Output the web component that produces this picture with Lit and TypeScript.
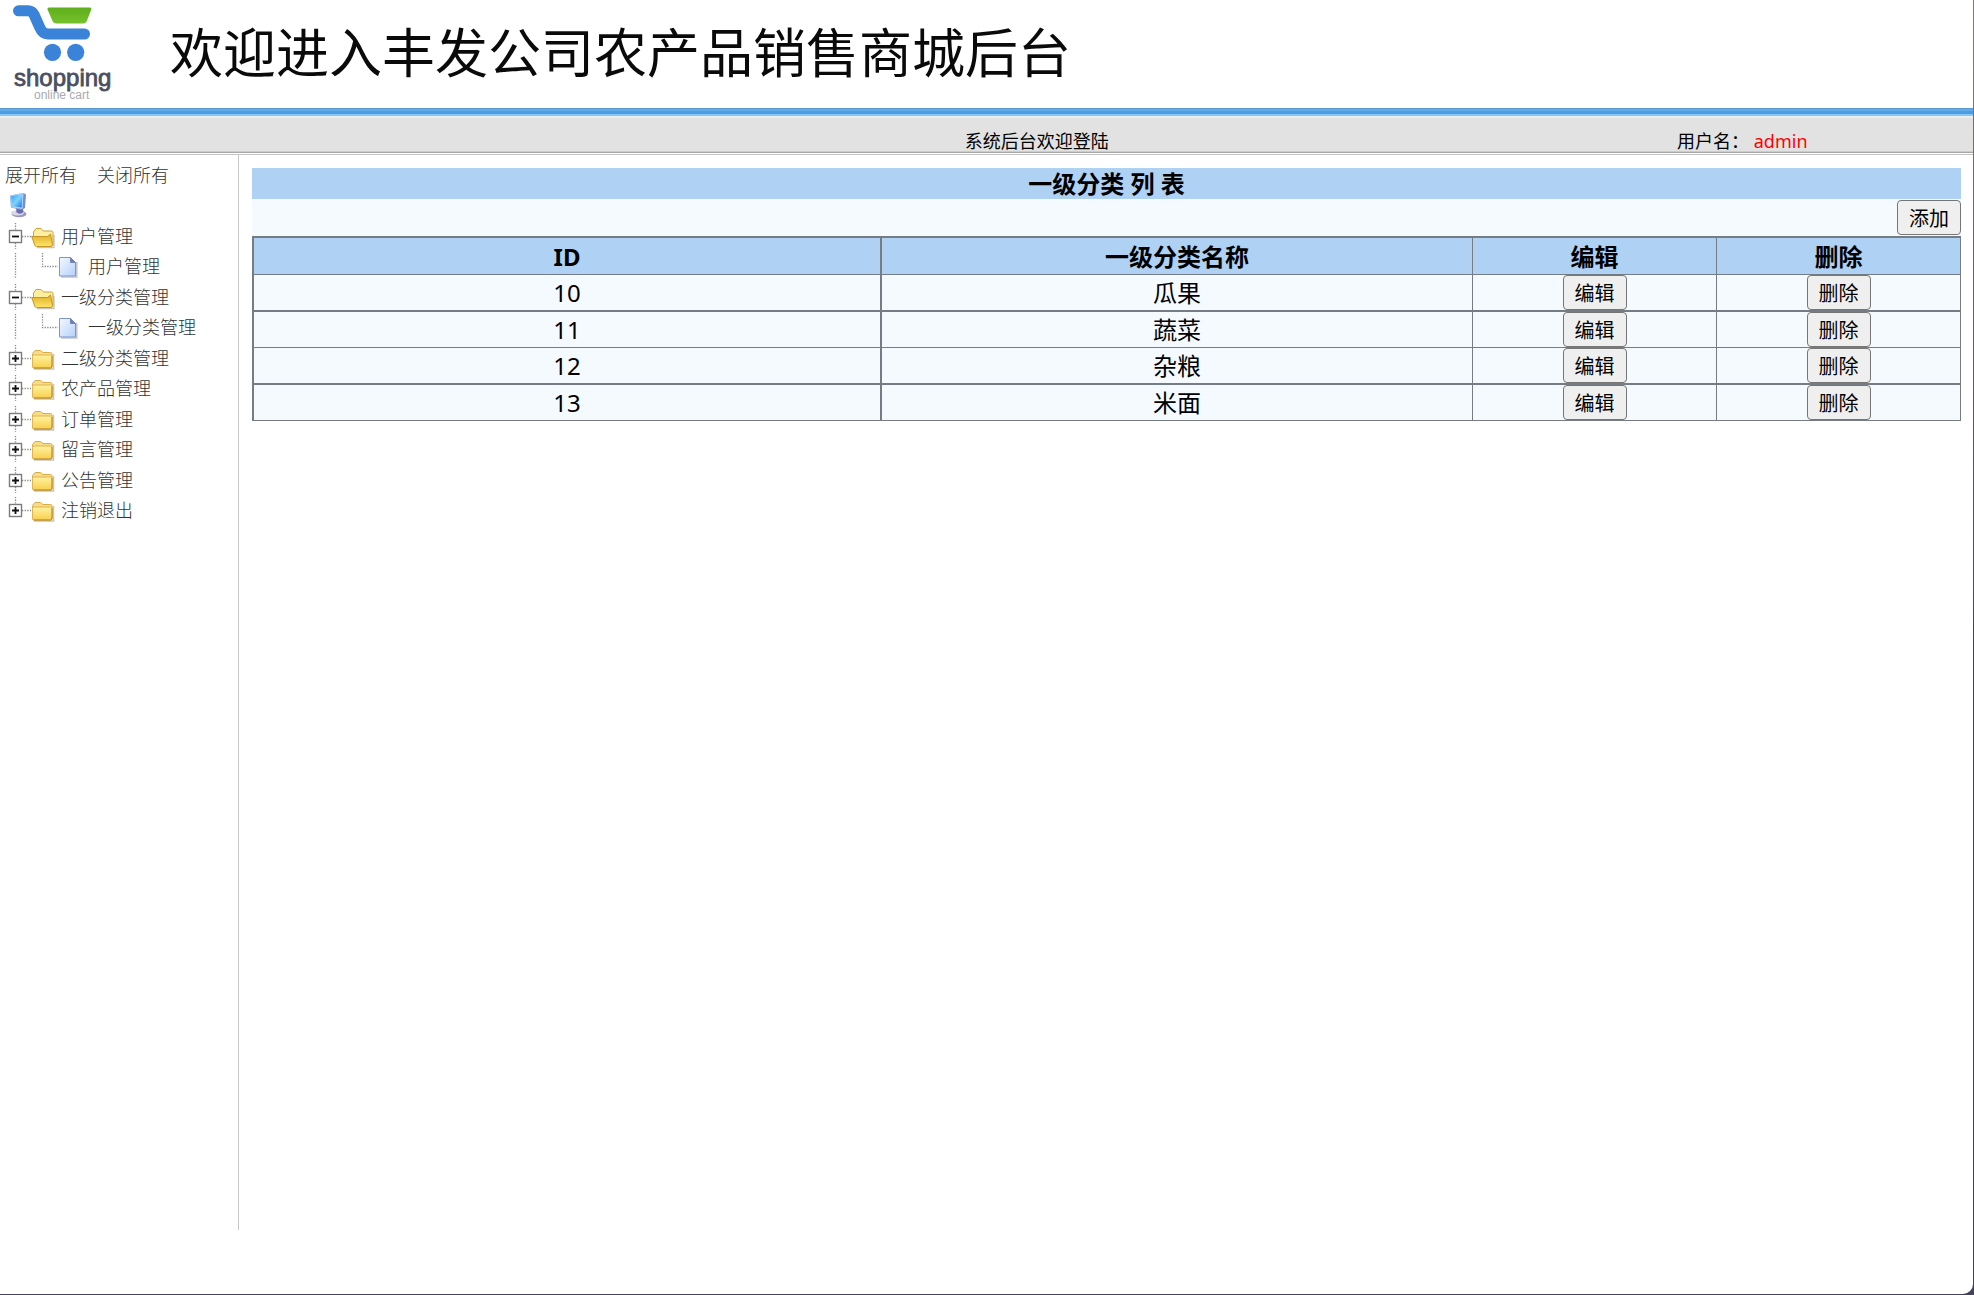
import { LitElement, html, svg, css, nothing } from "lit";
import { customElement, state } from "lit/decorators.js";
import { classMap } from "lit/directives/class-map.js";

interface Group {
  label: string;
  children: string[];
}

const GROUPS: Group[] = [
  { label: "用户管理", children: ["用户管理"] },
  { label: "一级分类管理", children: ["一级分类管理"] },
  { label: "二级分类管理", children: ["二级分类管理"] },
  { label: "农产品管理", children: ["农产品管理"] },
  { label: "订单管理", children: ["订单管理"] },
  { label: "留言管理", children: ["留言管理"] },
  { label: "公告管理", children: ["公告管理"] },
  { label: "注销退出", children: ["注销退出"] },
];

const CATEGORIES = [
  { id: 10, name: "瓜果" },
  { id: 11, name: "蔬菜" },
  { id: 12, name: "杂粮" },
  { id: 13, name: "米面" },
];

const dots = (d: string) =>
  svg`<path d=${d} fill="none" stroke="#8a8a8a" stroke-width="1.3" stroke-dasharray="1.3 1.3"/>`;

const logo = html`
  <svg class="logo" width="120" height="108" viewBox="0 0 120 108" role="img" aria-label="shopping online cart">
    <defs>
      <linearGradient id="basket" x1="0" y1="0" x2="0" y2="1">
        <stop offset="0" stop-color="#5fae1c" />
        <stop offset="1" stop-color="#76c22c" />
      </linearGradient>
    </defs>
    <path d="M18.500 10.800H28Q32 10.800 34 14.500L40 28Q42.500 34 48 34H84.500" fill="none" stroke="#3a83d8" stroke-width="11" stroke-linecap="round" stroke-linejoin="round" />
    <path d="M49 7.500H90Q92 7.500 91.300 9.500L87 20.500Q86 23.500 83 23.500H56.500Q53.500 23.500 52.300 20.500L47.500 9.500Q47 7.500 49 7.500Z" fill="url(#basket)" />
    <circle cx="52.500" cy="52.300" r="8.600" fill="#3a83d8" />
    <circle cx="75.700" cy="52.300" r="8.600" fill="#3a83d8" />
    <text x="14" y="86" class="logo-name">shopping</text>
    <text x="34" y="99" class="logo-sub">online cart</text>
  </svg>
`;

const computerIcon = html`
  <svg class="computer" width="18" height="26" viewBox="0 0 18 26" aria-hidden="true">
    <defs>
      <linearGradient id="screen" x1="0" y1="0" x2="1" y2="1">
        <stop offset="0" stop-color="#2f9cf0" />
        <stop offset=".5" stop-color="#7fd4fb" />
        <stop offset="1" stop-color="#1f6fe0" />
      </linearGradient>
    </defs>
    <ellipse cx="10" cy="22" rx="7.500" ry="3.300" fill="#9a98bc" />
    <ellipse cx="8.500" cy="20.800" rx="6.500" ry="2.600" fill="#d9d8ea" />
    <path d="M7 14L13.500 14L14.500 20Q11 23 7.500 20.500Z" fill="#6a6aac" />
    <path d="M1 3.500L14.500 1L17 2.500L16 16L12.500 18L2 15.500Z" fill="#7a8ccc" />
    <path d="M1 3.500L14.500 1L13.500 17L2.500 15.500Z" fill="#a9d4fa" />
    <path d="M2 4.300L13.500 2.300L12.700 15.500L3.300 14.300Z" fill="url(#screen)" />
  </svg>
`;

const toggleIcon = (open: boolean, last: boolean) => html`
  <svg width="24" height="26" viewBox="0 0 24 26" aria-hidden="true">
    ${dots(last ? "M8.500 0V7" : "M8.500 0V7M8.500 20V26")}
    ${dots("M15 13.500H24")}
    <rect x="2.500" y="7.500" width="12" height="12" fill="#fff" stroke="#7c7c7c" stroke-width="1.400" />
    <path d=${open ? "M5 13.500H12" : "M5 13.500H12M8.500 10V17"} stroke="#111" stroke-width="1.800" />
  </svg>
`;

const closedFolder = html`
  <svg width="24" height="26" viewBox="0 0 24 26" aria-hidden="true">
    <defs>
      <linearGradient id="front" x1="0" y1="0" x2="0" y2="1">
        <stop offset="0" stop-color="#fff2a0" />
        <stop offset="1" stop-color="#f9cf4e" />
      </linearGradient>
    </defs>
    <path d="M3 24H22.500V9" fill="none" stroke="#c9c4b8" stroke-width="1.500" />
    <path d="M1.500 21V8.500L4 5.500H9.500L12 7.500H19.500Q21 7.500 21 9V21Q21 23 19.500 23H3Q1.500 23 1.500 21Z" fill="#f8dc86" stroke="#d8ac48" />
    <path d="M1.500 21V11.500Q1.500 10 3 10H19.500Q21 10 21 11.500V21Q21 23 19.500 23H3Q1.500 23 1.500 21Z" fill="url(#front)" stroke="#e0b450" />
    <path d="M3 23H20Q21 22.500 21 21V11" fill="none" stroke="#b08a34" />
  </svg>
`;

const openFolder = html`
  <svg width="24" height="26" viewBox="0 0 24 26" aria-hidden="true">
    <defs>
      <linearGradient id="flap" x1="0" y1="0" x2="0" y2="1">
        <stop offset="0" stop-color="#dcae28" />
        <stop offset="1" stop-color="#ffe566" />
      </linearGradient>
    </defs>
    <path d="M6 24.500H23V12" fill="none" stroke="#c9c4b8" stroke-width="1.300" />
    <path d="M2.500 13V9L5 5.500H10L12.500 8H20.500Q22 8 22 9.500V21Q22 23 20.500 23H15Z" fill="#fdeea0" stroke="#d0a03c" />
    <path d="M.7 13.500H16.500L19.500 11L21.500 21.500Q21.500 23.500 20 23.500H5.500Q4.300 23.500 3.700 22Z" fill="url(#flap)" stroke="#c4962a" />
  </svg>
`;

const pageIcon = html`
  <svg width="24" height="26" viewBox="0 0 24 26" aria-hidden="true">
    <defs>
      <linearGradient id="sheet" x1="0" y1="0" x2="1" y2="1">
        <stop offset="0" stop-color="#f4f9ff" />
        <stop offset="1" stop-color="#b4d0fa" />
      </linearGradient>
    </defs>
    <path d="M3 24H18.800V9" fill="none" stroke="#c3c3cc" stroke-width="1.500" />
    <path d="M1.500 4.500H12.500L17.500 9.500V23H1.500Z" fill="url(#sheet)" stroke="#7f96cc" />
    <path d="M12.500 4.500V9.500H17.500Z" fill="#6a7fb8" stroke="#7486b8" />
  </svg>
`;

const childLines = (last: boolean) => html`
  <svg width="51" height="26" viewBox="0 0 51 26" aria-hidden="true">
    ${last ? nothing : dots("M8.500 0V26")}
    ${dots("M35.500 0V13.500H51")}
  </svg>
`;

@customElement("tree-menu")
export class TreeMenu extends LitElement {
  @state() private open = new Set<number>([0, 1]);

  static styles = css`
    :host {
      display: block;
      color: #333;
      font-size: 18px;
      font-weight: 300;
    }
    .actions {
      display: flex;
      gap: 20px;
      padding: 5px 5px 0;
    }
    button,
    a {
      font: inherit;
      color: inherit;
      text-decoration: none;
    }
    button {
      display: flex;
      padding: 0;
      border: 0;
      background: none;
      cursor: pointer;
    }
    .actions button {
      line-height: 30px;
    }
    .computer {
      display: block;
      margin: 2px 9px 2px;
    }
    ul {
      margin: 0;
      padding: 0;
      list-style: none;
    }
    svg {
      flex: none;
    }
    .row {
      display: flex;
      align-items: center;
      height: 31px;
      padding-left: 7px;
      line-height: 30px;
      white-space: nowrap;
    }
    .child,
    .closed:nth-child(even) .row {
      height: 30px;
    }
    .label {
      padding-left: 6px;
    }
  `;

  private toggle(i: number) {
    const next = new Set(this.open);
    if (!next.delete(i)) next.add(i);
    this.open = next;
  }

  render() {
    return html`
      <div class="actions">
        <button type="button" @click=${() => (this.open = new Set(GROUPS.keys()))}>展开所有</button>
        <button type="button" @click=${() => (this.open = new Set())}>关闭所有</button>
      </div>
      ${computerIcon}
      <ul>
        ${GROUPS.map((g, i) => {
          const open = this.open.has(i);
          const last = i === GROUPS.length - 1;
          return html`
            <li class=${classMap({ closed: !open })}>
              <div class="row">
                <button type="button" aria-expanded=${open} aria-label=${g.label} @click=${() => this.toggle(i)}>
                  ${toggleIcon(open, last)}
                </button>
                ${open ? openFolder : closedFolder}
                <a class="label" href="#">${g.label}</a>
              </div>
              ${open
                ? html`<ul>
                    ${g.children.map(
                      (c) => html`<li class="row child">${childLines(last)}${pageIcon}<a class="label" href="#">${c}</a></li>`
                    )}
                  </ul>`
                : nothing}
            </li>
          `;
        })}
      </ul>
    `;
  }
}

@customElement("category-list")
export class CategoryList extends LitElement {
  static styles = css`
    :host {
      display: block;
      background: #f4faff;
      color: #000;
      font-size: 24px;
    }
    h2 {
      margin: 0;
      background: #aed1f4;
      font-size: 24px;
      line-height: 31px;
      text-align: center;
    }
    .toolbar {
      display: flex;
      justify-content: flex-end;
      padding: 1px 0;
    }
    button {
      display: block;
      box-sizing: border-box;
      height: 35px;
      margin: 0 auto;
      padding: 2px 11px 0;
      border: 1px solid #767676;
      border-radius: 4px;
      background: #efefef;
      color: #000;
      font: inherit;
      font-size: 20px;
      line-height: 31px;
    }
    .toolbar button {
      margin: 0;
    }
    table {
      width: 100%;
      table-layout: fixed;
      border-spacing: 0;
      border: solid #767c84;
      border-width: 2px 0 0 2px;
    }
    .name {
      width: 591px;
    }
    .action {
      width: 244px;
    }
    th,
    td {
      box-sizing: border-box;
      height: 36px;
      padding: 0;
      border: solid #767c84;
      border-width: 0 1px 1px 0;
      line-height: 35px;
      text-align: center;
    }
    th {
      height: 37px;
      background: #aed1f4;
    }
    tbody tr:nth-child(odd) td {
      height: 37px;
      border-bottom-width: 2px;
    }
    th:first-child,
    td:first-child {
      border-right-width: 2px;
    }
  `;

  render() {
    return html`
      <h2>一级分类 列 表</h2>
      <div class="toolbar"><button type="button">添加</button></div>
      <table>
        <thead>
          <tr>
            <th scope="col">ID</th>
            <th class="name" scope="col">一级分类名称</th>
            <th class="action" scope="col">编辑</th>
            <th class="action" scope="col">删除</th>
          </tr>
        </thead>
        <tbody>
          ${CATEGORIES.map(
            (c) => html`<tr>
              <td>${c.id}</td>
              <td>${c.name}</td>
              <td><button type="button">编辑</button></td>
              <td><button type="button">删除</button></td>
            </tr>`
          )}
        </tbody>
      </table>
    `;
  }
}

@customElement("app-root")
export class AppRoot extends LitElement {
  static styles = css`
    :host {
      display: block;
      box-sizing: border-box;
      min-height: 100vh;
      padding: 0 1px 1px 0;
      background: linear-gradient(#96706f, #45435a 50%);
      font-family: "Noto Sans", "Noto Sans CJK SC", sans-serif;
    }
    .page {
      display: flex;
      flex-direction: column;
      box-sizing: border-box;
      min-height: calc(100vh - 1px);
      padding-bottom: 64px;
      border-bottom-right-radius: 10px;
      background: #fff;
    }
    .banner {
      display: flex;
      align-items: flex-start;
      gap: 50px;
      height: 108px;
    }
    .logo {
      flex: none;
    }
    .logo-name {
      fill: #4b4f60;
      stroke: #4b4f60;
      stroke-width: 0.8px;
      font: 24px "Liberation Sans", sans-serif;
    }
    .logo-sub {
      fill: #a9a9b0;
      font: 12px "Liberation Sans", sans-serif;
    }
    h1 {
      margin: 0;
      color: #0a0a0a;
      font-size: 53px;
      font-weight: 400;
      line-height: 106px;
      white-space: nowrap;
    }
    .status {
      display: grid;
      grid-template-columns: 489fr 361fr 150fr;
      align-items: end;
      box-sizing: border-box;
      height: 47px;
      border-bottom: 1px solid #c4c4c4;
      background: linear-gradient(
        #5a9ad2 0 1px,
        #62abe8 1px 3px,
        #4a9ee4 3px 6px,
        #8cc4f2 6px 8px,
        #e6eef6 8px 10px,
        #e2e2e2 10px 43px,
        #cccccc 43px 44px,
        #a8a8a8 44px 45px,
        #ffffff 45px
      );
      font-size: 18px;
      line-height: 24px;
    }
    .status span {
      padding-bottom: 1px;
      white-space: nowrap;
    }
    .status .welcome {
      grid-column: 2;
    }
    .user {
      color: #f00;
      font-weight: 400;
    }
    .body {
      display: flex;
      flex: 1;
    }
    tree-menu {
      flex: none;
      width: 238px;
      border-right: 1px solid #c6c6c6;
    }
    main {
      flex: 1;
      min-width: 0;
      padding: 13px 12px 0 13px;
    }
  `;

  render() {
    return html`
      <div class="page">
        <header>
          <div class="banner">
            ${logo}
            <h1>欢迎进入丰发公司农产品销售商城后台</h1>
          </div>
          <div class="status">
            <span class="welcome">系统后台欢迎登陆</span>
            <span>用户名： <b class="user">admin</b></span>
          </div>
        </header>
        <div class="body">
          <tree-menu></tree-menu>
          <main><category-list></category-list></main>
        </div>
      </div>
    `;
  }
}
